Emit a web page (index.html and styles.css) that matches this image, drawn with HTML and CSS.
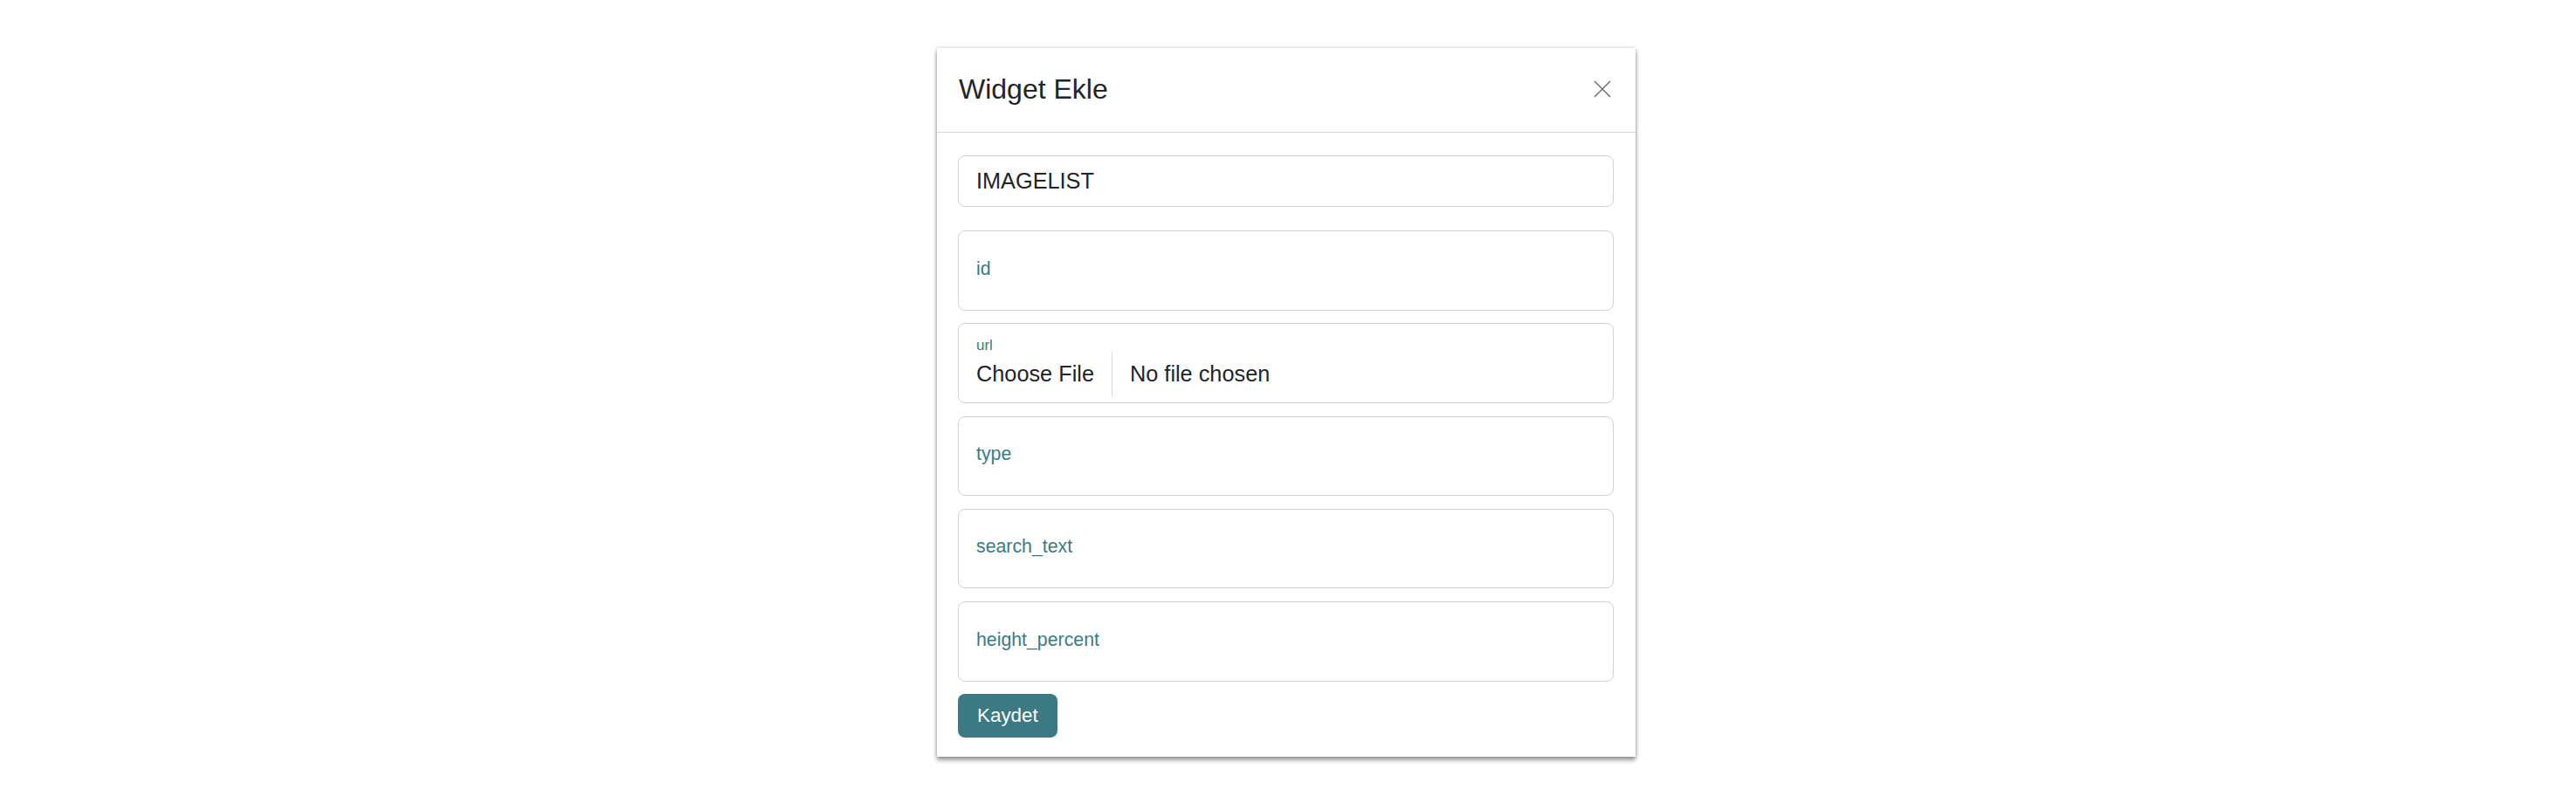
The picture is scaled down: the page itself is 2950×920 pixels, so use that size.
FILE: index.html
```html
<!DOCTYPE html>
<html lang="tr">
<head>
<meta charset="utf-8">
<title>Widget Ekle</title>
<link rel="stylesheet" href="styles.css">
</head>
<body>
<div class="stage">
  <div class="modal">
    <div class="modal-header">
      <h5 class="modal-title">Widget Ekle</h5>
      <button class="btn-close" type="button" aria-label="Close">
        <svg width="20" height="20" viewBox="0 0 20 20"><path d="M1 1 L19 19 M19 1 L1 19" stroke="#707070" stroke-width="1.5" fill="none"/></svg>
      </button>
    </div>
    <div class="modal-body">
      <input class="text-input" type="text" value="IMAGELIST">
      <div class="float-box"><span class="float-label">id</span></div>
      <div class="float-box file-box">
        <span class="file-label">url</span>
        <div class="file-row">
          <span class="file-btn">Choose File</span>
          <span class="file-name">No file chosen</span>
        </div>
      </div>
      <div class="float-box"><span class="float-label">type</span></div>
      <div class="float-box"><span class="float-label">search_text</span></div>
      <div class="float-box"><span class="float-label">height_percent</span></div>
      <button class="save-btn" type="button">Kaydet</button>
    </div>
  </div>
</div>
</body>
</html>
```
FILE: styles.css
```css
html, body {
  margin: 0;
  padding: 0;
  background: #ffffff;
}
body {
  font-family: "Liberation Sans", Arial, Helvetica, sans-serif;
  color: #212529;
  min-height: 920px;
}
.stage {
  display: flex;
  justify-content: center;
  align-items: flex-start;
  padding-top: 55px;
  padding-right: 4px;
  padding-bottom: 50px;
}
.modal {
  width: 800px;
  background: #ffffff;
  box-shadow: 0 0 4px rgba(0, 0, 0, 0.22), 0 4px 5px rgba(0, 0, 0, 0.38);
  display: flex;
  flex-direction: column;
}
.modal-header {
  height: 97px;
  box-sizing: border-box;
  border-bottom: 1px solid #d9d9d9;
  display: flex;
  align-items: center;
  justify-content: space-between;
  padding: 0 28px 3px 25px;
}
.modal-title {
  margin: 0;
  font-size: 32px;
  line-height: 38px;
  font-weight: 400;
  color: #212529;
}
.btn-close {
  border: 0;
  background: transparent;
  padding: 0;
  width: 20px;
  height: 20px;
  display: flex;
  cursor: pointer;
}
.modal-body {
  padding: 26px 25px 22px 24px;
  display: flex;
  flex-direction: column;
  align-items: stretch;
}
.text-input {
  height: 59px;
  box-sizing: border-box;
  border: 1px solid #d2d2d2;
  border-radius: 8px;
  padding: 0 20px;
  font-family: inherit;
  font-size: 25.3px;
  color: #212529;
  margin: 0 0 27px 0;
  outline: none;
}
.float-box {
  height: 91.5px;
  box-sizing: border-box;
  border: 1px solid #d2d2d2;
  border-radius: 8px;
  padding: 30.5px 20px 0 20px;
  margin-bottom: 14.75px;
}
.float-label {
  display: block;
  font-size: 21.3px;
  line-height: 25px;
  color: #3b7b83;
}
.file-box {
  padding-top: 17px;
}
.file-label {
  display: block;
  font-size: 17px;
  line-height: 15px;
  color: #3b7b83;
}
.file-row {
  display: flex;
  align-items: stretch;
  height: 51px;
  font-size: 25.3px;
  line-height: 51px;
  color: #212529;
}
.file-btn {
  padding-right: 20px;
  border-right: 1px solid #d9d9d9;
}
.file-name {
  padding-left: 20px;
}
.save-btn {
  align-self: flex-start;
  margin-top: -0.75px;
  height: 50px;
  padding: 0 22px;
  border: 0;
  border-radius: 8px;
  background: #3b7a82;
  color: #ffffff;
  font-family: inherit;
  font-size: 22.4px;
  line-height: 50px;
  cursor: pointer;
}
```
